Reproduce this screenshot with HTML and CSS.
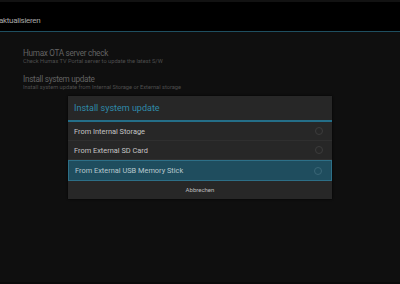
FILE: index.html
```html
<!DOCTYPE html>
<html lang="de">
<head>
    <meta charset="UTF-8">
    <title>Aktualisieren</title>
    <link rel="stylesheet" href="styles.css">
</head>
<body>
    <div class="screen">
        <div class="action-bar">
            <span class="bar-title">aktualisieren</span>
        </div>
        <ul class="prefs">
            <li class="pref">
                <div class="pref-title">Humax OTA server check</div>
                <div class="pref-summary">Check Humax TV Portal server to update the latest S/W</div>
            </li>
            <li class="pref">
                <div class="pref-title">Install system update</div>
                <div class="pref-summary">Install system update from Internal Storage or External storage</div>
            </li>
        </ul>

        <div class="dialog">
            <div class="dialog-title">Install system update</div>
            <ul class="choices">
                <li class="choice">From Internal Storage<span class="radio"></span></li>
                <li class="choice">From External SD Card<span class="radio"></span></li>
                <li class="choice selected">From External USB Memory Stick<span class="radio"></span></li>
            </ul>
            <div class="dialog-button">Abbrechen</div>
        </div>
    </div>
</body>
</html>
```

FILE: styles.css
```css
* {
    margin: 0;
    padding: 0;
    box-sizing: border-box;
}

body {
    width: 400px;
    height: 284px;
    background-color: #0f0f0f;
    font-family: Roboto, "Liberation Sans", sans-serif;
    overflow: hidden;
}

.screen {
    position: relative;
    height: 284px;
    border-top: 2px solid #121212;
    border-bottom: 2px solid #0a0a0a;
}

.action-bar {
    display: flex;
    align-items: center;
    height: 30px;
    padding-top: 8px;
    background-color: #000;
    border-bottom: 1px solid #1f4f60;
}

.bar-title {
    margin-left: -1px;
    font-size: 8px;
    letter-spacing: -0.3px;
    color: #a8a8a8;
}

li {
    list-style: none;
}

.prefs {
    padding-top: 16px;
}

.pref {
    height: 26px;
    padding-left: 23px;
}

.pref-title {
    font-size: 8.2px;
    line-height: 10px;
    letter-spacing: -0.3px;
    color: #626262;
}

.pref-summary {
    font-size: 5.7px;
    line-height: 7px;
    color: #4e4e4e;
}

.dialog {
    position: absolute;
    top: 94px;
    left: 68px;
    width: 264px;
    background-color: #272727;
    box-shadow: 0 0 2px #000;
}

.dialog-title {
    height: 26px;
    padding-left: 6px;
    line-height: 25px;
    font-size: 9px;
    color: #2f8aaa;
    border-bottom: 2px solid #246e88;
}

.choice {
    display: flex;
    justify-content: space-between;
    align-items: center;
    height: 19px;
    padding: 0 9px 0 6px;
    font-size: 7.4px;
    color: #c4c4c4;
    border-bottom: 1px solid #2f2f2f;
}

.choice.selected {
    height: 21px;
    background-color: #1f4d5e;
    border: 1px solid #2d6f87;
    color: #b8c8cd;
}

.radio {
    width: 8px;
    height: 8px;
    border: 1px solid #3c3c3c;
    border-radius: 50%;
}

.selected .radio {
    border-color: #3a6676;
}

.dialog-button {
    height: 18px;
    line-height: 18px;
    text-align: center;
    font-size: 6px;
    color: #bdbdbd;
}
```
